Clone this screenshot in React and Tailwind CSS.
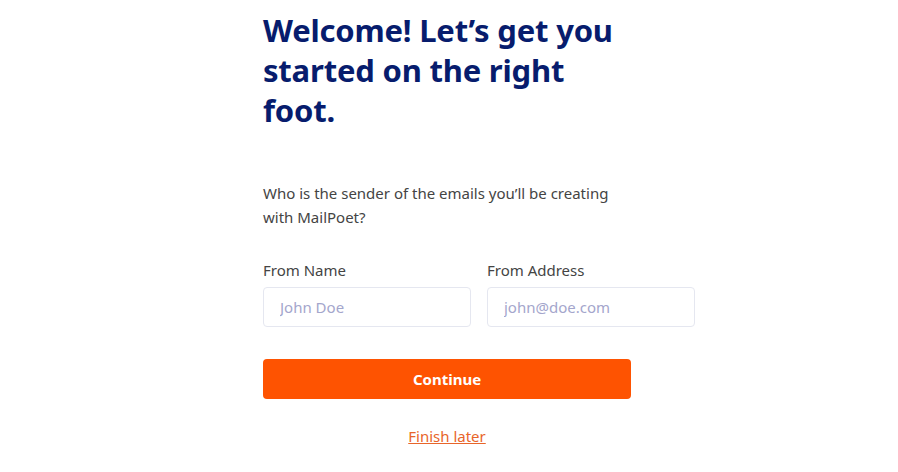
export default function App() {
    return (
        <div className="min-h-screen bg-white" style={{ fontFamily: '"Noto Sans", "Open Sans", sans-serif' }}>
            <div className="ml-[263px] pt-[10px] w-[432px]">
                {/* Heading */}
                <h1 className="w-[368px] text-[31px] leading-[40px] font-bold text-[#071c6d] tracking-[-0.2px]">
                    Welcome! Let’s get you started on the right foot.
                </h1>

                <p className="mt-[51px] w-[368px] text-[15px] leading-[24px] text-[#444444]">
                    Who is the sender of the emails you’ll be creating with MailPoet?
                </p>

                {/* Sender fields */}
                <div className="mt-[31px] flex gap-4">
                    <label className="flex flex-col w-[208px]">
                        <span className="text-[15px] leading-[20px] text-[#444444]">From Name</span>
                        <input
                            type="text"
                            placeholder="John Doe"
                            className="mt-[7px] w-full min-w-0 h-[40px] px-4 text-[15px] rounded border border-[#e5e7f0] placeholder:text-[#a4a6cc] outline-none"
                        />
                    </label>
                    <label className="flex flex-col w-[208px]">
                        <span className="text-[15px] leading-[20px] text-[#444444]">From Address</span>
                        <input
                            type="email"
                            placeholder="john@doe.com"
                            className="mt-[7px] w-full min-w-0 h-[40px] px-4 text-[15px] rounded border border-[#e5e7f0] placeholder:text-[#a4a6cc] outline-none"
                        />
                    </label>
                </div>

                <div className="w-[368px]">
                    <button className="mt-[32px] w-full h-[40px] rounded bg-[#fe5301] text-white text-[15px] font-bold">
                        Continue
                    </button>
                    <div className="mt-[25px] text-center">
                        <a href="#" className="text-[15px] text-[#e8652a] underline">Finish later</a>
                    </div>
                </div>
            </div>
        </div>
    );
}
